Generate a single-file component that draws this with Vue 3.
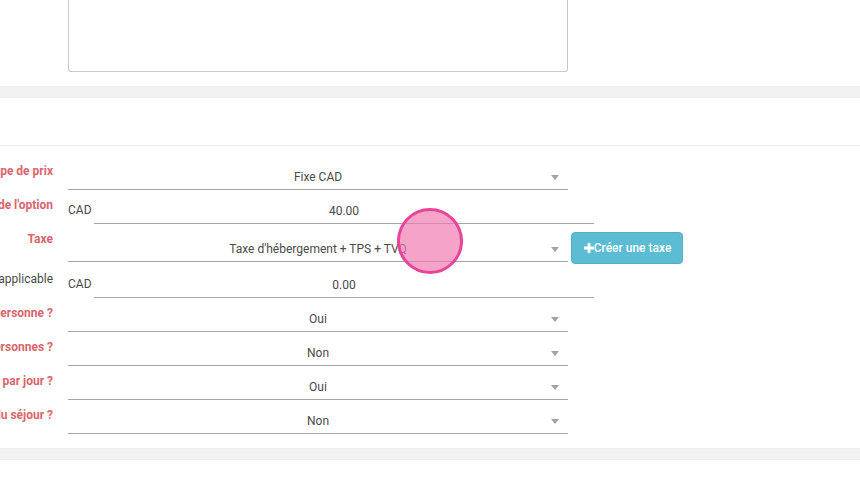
<script setup>
const rows = [
  { label: 'Type de prix', value: 'Fixe CAD', kind: 'select', req: true },
  { label: "Prix de l'option", value: '40.00', kind: 'money', req: true },
  { label: 'Taxe', value: "Taxe d'hébergement + TPS + TVQ", kind: 'select', req: true, action: true },
  { label: 'Montant applicable', value: '0.00', kind: 'money', req: false, mid: true },
  { label: 'Par personne ?', value: 'Oui', kind: 'select', req: true },
  { label: 'Nombre de personnes ?', value: 'Non', kind: 'select', req: true },
  { label: 'Prix par jour ?', value: 'Oui', kind: 'select', req: true },
  { label: 'Prix du séjour ?', value: 'Non', kind: 'select', req: true },
]
</script>

<template>
  <div class="page">
    <div class="top">
      <div class="textarea"></div>
    </div>
    <div class="band"></div>
    <div class="heading"></div>
    <div class="form">
      <div v-for="row in rows" :key="row.label" class="row" :class="{ tall: row.action, mid: row.mid }">
        <div class="label" :class="{ req: row.req }"><span>{{ row.label }}</span></div>
        <div v-if="row.kind === 'select'" class="select">
          <span class="value">{{ row.value }}</span>
          <span class="caret"></span>
        </div>
        <div v-else class="money">
          <span class="cur">CAD</span>
          <span class="input">{{ row.value }}</span>
        </div>
        <button v-if="row.action" class="btn" type="button">
          <svg class="plus" viewBox="0 0 10 10" width="10" height="10"><path d="M3.6 0h2.8v3.6H10v2.8H6.4V10H3.6V6.4H0V3.6h3.6z" fill="#fff"/></svg>Créer une taxe
        </button>
      </div>
    </div>
    <div class="band last"></div>
    <div class="marker"></div>
  </div>
</template>

<style scoped>
.page {
  position: relative;
  width: 860px;
  height: 481px;
  overflow: hidden;
  background: #fff;
  font-family: Roboto, "Liberation Sans", sans-serif;
  font-size: 12px;
  color: #4a4a4a;
}
.top {
  height: 86px;
  padding-left: 68px;
  box-sizing: border-box;
}
.textarea {
  width: 500px;
  height: 72px;
  box-sizing: border-box;
  border: 1px solid #c8c8c8;
  border-top: 0;
  border-radius: 0 0 3px 3px;
}
.band {
  background: #f2f2f2;
  border-top: 1px solid #eee;
  border-bottom: 1px solid #eee;
  box-sizing: border-box;
  height: 12px;
}
.heading {
  height: 47px;
  border-bottom: 1px solid #eee;
}
.form {
  padding-top: 10px;
  padding-bottom: 14px;
}
.row {
  display: flex;
  align-items: flex-start;
  height: 34px;
}
.row.tall {
  height: 38px;
}
.row.mid {
  height: 36px;
}
.label {
  width: 53px;
  margin-right: 15px;
  display: flex;
  justify-content: flex-end;
  white-space: nowrap;
  font-size: 12px;
  line-height: 14px;
  padding-top: 8px;
}
.mid .label {
  padding-top: 10px;
}
.label.req {
  color: #d9666c;
  font-weight: 700;
}
.select {
  position: relative;
  width: 500px;
  height: 34px;
  box-sizing: border-box;
  border-bottom: 1px solid #a6a6a6;
  display: flex;
  align-items: center;
  justify-content: center;
  padding: 8px 0 0;
}
.tall .select {
  height: 38px;
  padding-top: 12px;
}
.value {
  line-height: 14px;
}
.caret {
  position: absolute;
  right: 9px;
  top: 19px;
  width: 0;
  height: 0;
  border-left: 4px solid transparent;
  border-right: 4px solid transparent;
  border-top: 5px solid #a3a3a3;
}
.tall .caret {
  top: 23px;
}
.money {
  display: flex;
  width: 526px;
  height: 34px;
}
.mid .money {
  height: 36px;
}
.cur {
  width: 26px;
  padding-top: 13px;
  line-height: 14px;
}
.mid .cur {
  padding-top: 15px;
}
.input {
  flex: 1;
  box-sizing: border-box;
  border-bottom: 1px solid #a6a6a6;
  text-align: center;
  padding-top: 14px;
  line-height: 14px;
}
.mid .input {
  padding-top: 16px;
}
.btn {
  margin: 8px 0 0 3px;
  width: 112px;
  height: 32px;
  box-sizing: border-box;
  background: #5bbcd3;
  border: 1px solid #53b0c7;
  border-radius: 4px;
  color: #fff;
  font: 500 12px Roboto, "Liberation Sans", sans-serif;
  padding: 0 0 0 1px;
  display: flex;
  align-items: center;
  justify-content: center;
}
.marker {
  position: absolute;
  left: 397px;
  top: 208px;
  width: 66px;
  height: 66px;
  box-sizing: border-box;
  border-radius: 50%;
  background: rgba(241, 120, 175, 0.68);
  border: 3px solid #e6459a;
}
</style>
